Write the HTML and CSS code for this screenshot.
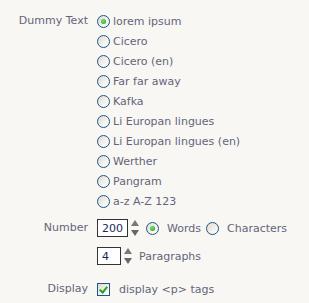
FILE: index.html
```html
<!DOCTYPE html>
<html lang="en">
<head>
    <meta charset="UTF-8">
    <title>Dummy Text</title>
    <link rel="stylesheet" href="styles.css">
</head>
<body>

    <div class="settings">
        <div class="row">
            <div class="label">Dummy Text</div>
            <div class="field">
                <label class="opt"><input type="radio" name="dummy" checked> lorem ipsum</label>
                <label class="opt"><input type="radio" name="dummy"> Cicero</label>
                <label class="opt"><input type="radio" name="dummy"> Cicero (en)</label>
                <label class="opt"><input type="radio" name="dummy"> Far far away</label>
                <label class="opt"><input type="radio" name="dummy"> Kafka</label>
                <label class="opt"><input type="radio" name="dummy"> Li Europan lingues</label>
                <label class="opt"><input type="radio" name="dummy"> Li Europan lingues (en)</label>
                <label class="opt"><input type="radio" name="dummy"> Werther</label>
                <label class="opt"><input type="radio" name="dummy"> Pangram</label>
                <label class="opt"><input type="radio" name="dummy"> a-z A-Z 123</label>
            </div>
        </div>

        <div class="row number-row">
            <div class="label">Number</div>
            <div class="field">
                <div class="line">
                    <input type="text" class="num num-wide" value="200">
                    <span class="spin"></span>
                    <label class="opt"><input type="radio" name="unit" checked> Words</label>
                    <label class="opt"><input type="radio" name="unit"> Characters</label>
                </div>
                <div class="line">
                    <input type="text" class="num" value="4">
                    <span class="spin"></span>
                    <span class="unit">Paragraphs</span>
                </div>
            </div>
        </div>

        <div class="row display-row">
            <div class="label">Display</div>
            <div class="field">
                <label class="opt check"><input type="checkbox" checked> display &lt;p&gt; tags</label>
            </div>
        </div>
    </div>

</body>
</html>
```

FILE: styles.css
```css
body {
    margin: 0;
    padding: 0;
    background-color: #f8f7f3;
    color: #64647a;
    font-family: 'DejaVu Sans', Verdana, sans-serif;
    font-size: 11px;
}

.settings {
    padding-top: 11px;
}

.row {
    display: grid;
    grid-template-columns: 88px 1fr;
    column-gap: 9px;
}

.label {
    text-align: right;
    line-height: 20px;
}

.field {
    display: flex;
    flex-direction: column;
}

.opt {
    display: flex;
    align-items: center;
    height: 20px;
    gap: 3px;
}

input[type="radio"], input[type="checkbox"] {
    appearance: none;
    -webkit-appearance: none;
    margin: 0;
    width: 13px;
    height: 13px;
    border: 1px solid #1f5488;
    border-radius: 50%;
    background: linear-gradient(135deg, #dcdad2 0%, #f4f3ee 60%, #ffffff 100%);
    box-sizing: border-box;
    position: relative;
    flex-shrink: 0;
}

input[type="radio"]:checked::after {
    content: "";
    position: absolute;
    left: 3px;
    top: 3px;
    width: 5px;
    height: 5px;
    border-radius: 50%;
    background: radial-gradient(circle at 40% 40%, #6ee36e, #1fa01f);
}

input[type="checkbox"] {
    border-radius: 0;
    background: linear-gradient(135deg, #dcdad2 0%, #f4f3ee 60%, #ffffff 100%);
}

input[type="checkbox"]:checked::after {
    content: "";
    position: absolute;
    left: 3px;
    top: 1px;
    width: 3px;
    height: 6px;
    border: solid #21a121;
    border-width: 0 2px 2px 0;
    transform: rotate(40deg);
}

.number-row {
    margin-top: 7px;
}

.line {
    display: flex;
    align-items: center;
    height: 20px;
}

.line + .line {
    margin-top: 8px;
}

.num {
    width: 24px;
    height: 18px;
    box-sizing: border-box;
    border: 1px solid #333;
    background: #fff;
    color: #1a2a5a;
    font-family: inherit;
    font-size: 11px;
    padding: 0 0 0 4px;
    margin: 0;
    outline: none;
}

.num-wide {
    width: 31px;
}

.spin {
    position: relative;
    width: 8px;
    height: 16px;
    margin: 0 7px 0 3px;
}

.spin::before, .spin::after {
    content: "";
    position: absolute;
    left: 0;
    border-left: 4px solid transparent;
    border-right: 4px solid transparent;
}

.spin::before {
    top: 0;
    border-bottom: 6px solid #777;
}

.spin::after {
    bottom: 0;
    border-top: 6px solid #666;
}

.line .opt + .opt {
    margin-left: 5px;
}

.line .opt input {
    margin-right: 5px;
}

.display-row {
    margin-top: 13px;
}

.check {
    gap: 9px;
}
```
